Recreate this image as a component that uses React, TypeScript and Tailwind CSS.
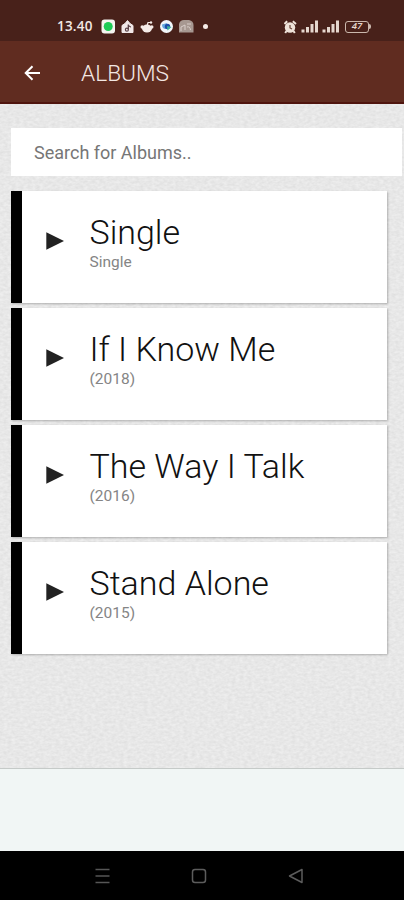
import { useState } from 'react';

interface Album {
  id: number;
  title: string;
  caption: string;
}

const albums: Album[] = [
  { id: 1, title: 'Single', caption: 'Single' },
  { id: 2, title: 'If I Know Me', caption: '(2018)' },
  { id: 3, title: 'The Way I Talk', caption: '(2016)' },
  { id: 4, title: 'Stand Alone', caption: '(2015)' },
];

function SignalBars() {
  return (
    <svg width="18" height="13" viewBox="0 0 18 13" fill="#e6d8cf">
      <rect x="0.5" y="9.5" width="3" height="3" />
      <rect x="5" y="7" width="3" height="5.5" />
      <rect x="9.5" y="4" width="3" height="8.5" />
      <rect x="14" y="0.5" width="3" height="12" />
    </svg>
  );
}

function StatusBar() {
  return (
    <div className="flex h-[41px] items-center bg-[#48211a] pt-3 pl-[57px] text-[#f3e9e5]">
      <span className="w-[44px] font-['Open_Sans',sans-serif] text-[13.5px] leading-none font-semibold tracking-[0.2px]">
        13.40
      </span>
      {/* Notification icons */}
      <svg width="110" height="16" viewBox="0 0 110 16">
        <rect x="0.5" y="0.5" width="13.500" height="14" rx="3" fill="#f4f4ef" />
        <circle cx="7.200" cy="7.500" r="4.500" fill="#1ecb55" />
        <path d="M24 4.500 L26.500 1.500 L29 4.500 L32 6.500 V13.500 H21 V6.500 Z" fill="#f1e8e8" stroke="#f1e8e8" strokeLinejoin="round" />
        <path d="M27.300 5.500 V10.500 M27.300 6 Q28.500 8 30 7.800" fill="none" stroke="#5b4147" strokeWidth="1.300" />
        <circle cx="25.900" cy="10.700" r="1.500" fill="none" stroke="#5b4147" strokeWidth="1.200" />
        <ellipse cx="46" cy="9.500" rx="5" ry="4" fill="#f6ece8" />
        <circle cx="41.200" cy="8" r="1.700" fill="#f6ece8" />
        <circle cx="50.800" cy="8" r="1.700" fill="#f6ece8" />
        <path d="M46 7 L47 3.500 L50 3.500" fill="none" stroke="#f6ece8" strokeWidth="1.200" />
        <circle cx="50" cy="3.500" r="1.200" fill="#f6ece8" />
        <circle cx="65.500" cy="7.500" r="6.500" fill="#f3f7fa" />
        <path d="M61 5.500 L66 4 L65 10 Q61 10 61 5.500Z" fill="#64a9df" />
        <circle cx="66.500" cy="7.500" r="2.700" fill="#1f4fa8" />
        <path d="M66 7 L70.500 8 L66.500 11.500Z" fill="#3bb39a" />
        <path d="M78 5 Q79 1 83 1 H88 Q92.500 2 92.500 6 V13.500 H78Z" fill="#a79891" />
        <path d="M80 12 V8 L84 6 V11 M86 5 H90 M86 8 Q89 7 89.500 11" fill="none" stroke="#d9ceca" strokeWidth="1" />
        <circle cx="104.500" cy="7.500" r="2.500" fill="#f6ece8" />
      </svg>
      {/* Alarm, signal and battery */}
      <div className="ml-auto flex items-center gap-[3px] pr-[33px]">
        <svg width="14" height="14" viewBox="0 0 14 14">
          <circle cx="6" cy="7.500" r="5.200" fill="#eee2d9" />
          <path d="M0.500 4 L3.200 1.300 M12 4 L8.800 1.300 M2.500 11 L1.200 13 M9.500 11 L10.800 13" stroke="#eee2d9" strokeWidth="2" />
          <path d="M6 5 V8 L8 9" fill="none" stroke="#6a4338" strokeWidth="1.200" />
        </svg>
        <SignalBars />
        <SignalBars />
        <div className="ml-[2px] flex items-center">
          <div className="flex h-[12px] w-[24px] items-center justify-center rounded-[3px] border border-[#cbb8ad] font-['Open_Sans',sans-serif] text-[9.5px] font-semibold text-[#e6d8cf] italic">
            47
          </div>
          <div className="h-[5px] w-[2px] rounded-r-full bg-[#cbb8ad]" />
        </div>
      </div>
    </div>
  );
}

function PaperTexture() {
  return (
    <svg className="absolute inset-0 h-full w-full" aria-hidden="true">
      <filter id="paper" x="0" y="0" width="100%" height="100%" colorInterpolationFilters="sRGB">
        <feTurbulence type="fractalNoise" baseFrequency="0.25 0.4" numOctaves="2" seed="8" />
        <feColorMatrix values="0.085 0 0 0 0.865  0.085 0 0 0 0.865  0.085 0 0 0 0.865  0 0 0 0 1" />
      </filter>
      <rect width="100%" height="100%" filter="url(#paper)" />
    </svg>
  );
}

function AlbumCard({ album }: { album: Album }) {
  return (
    <li className="flex h-28 border-l-[11px] border-black bg-white pl-6 shadow-[1px_1px_2px_rgba(0,0,0,0.25)]">
      <svg className="mt-[41px] shrink-0" width="18" height="18" viewBox="0 0 18 18">
        <path d="M0.300 0.300 L18 9 L0.300 17.700Z" fill="#222" />
      </svg>
      <div className="pt-[21px] pl-[25.5px]">
        <h2 className="text-[34px] leading-[40px] font-[350] whitespace-nowrap text-[#111]">{album.title}</h2>
        <p className="mt-px text-[15.5px] leading-[18px] text-[#858585]">{album.caption}</p>
      </div>
    </li>
  );
}

export default function App() {
  const [query, setQuery] = useState('');

  const visible = albums.filter((album) => album.title.toLowerCase().includes(query.toLowerCase()));

  return (
    <div className="flex h-[900px] w-[404px] flex-col overflow-hidden font-[Roboto,sans-serif]">
      <StatusBar />

      {/* Header */}
      <header className="flex h-[63px] items-center border-b-2 border-[#4f150e] bg-[#602c20] pl-[24px]">
        <button aria-label="Back" className="pt-[2px]">
          <svg width="17" height="16" viewBox="0 0 17 16" fill="none" stroke="#fff" strokeWidth="2">
            <path d="M16 8 H2 M8.500 1.200 L1.700 8 L8.500 14.800" />
          </svg>
        </button>
        <h1 className="pt-[5px] pl-[40px] text-[22.7px] font-[350] text-[#f3e7e3]">ALBUMS</h1>
      </header>

      {/* Album list */}
      <main className="relative h-[664px] bg-[#e8e8e8]">
        <PaperTexture />
        <div className="relative pt-6 pl-[11px]">
          <input
            value={query}
            onChange={(e) => setQuery(e.target.value)}
            placeholder="Search for Albums.."
            className="block h-12 w-[391px] bg-white px-[23px] text-[18px] text-[#444] outline-none placeholder:text-[#767676]"
          />
          <ul className="mt-[15px] flex w-[376px] flex-col gap-[5px]">
            {visible.map((album) => (
              <AlbumCard key={album.id} album={album} />
            ))}
          </ul>
        </div>
      </main>

      <footer className="h-[83px] border-t border-[#c5cac8] bg-[#f1f6f5]" />

      {/* Navigation bar */}
      <nav className="flex flex-1 items-center justify-center gap-[81px] bg-black pr-[6px]">
        <svg width="16" height="16" viewBox="0 0 16 16" stroke="#565656" strokeWidth="1.500">
          <path d="M1.500 1.500 H15.500 M1.500 8 H15.500 M1.500 14.500 H15.500" />
        </svg>
        <svg width="16" height="16" viewBox="0 0 16 16" fill="none" stroke="#5c5c5c" strokeWidth="1.500">
          <rect x="1.500" y="1.500" width="13" height="13" rx="2.500" />
        </svg>
        <svg width="16" height="16" viewBox="0 0 16 16" fill="none" stroke="#5c5c5c" strokeWidth="1.500" strokeLinejoin="round">
          <path d="M14 1.500 L1.500 8 L14 14.500Z" />
        </svg>
      </nav>
    </div>
  );
}
